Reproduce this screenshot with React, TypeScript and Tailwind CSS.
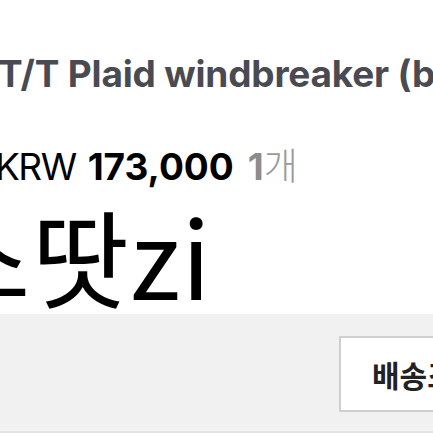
export default function App() {
  return (
    <div className="flex h-[433px] w-[433px] flex-col overflow-hidden bg-white text-black">
      <div className="shrink-0 overflow-hidden whitespace-nowrap">
        <div className="ml-[-2px] mt-[54px] font-['Inter','Noto_Sans_CJK_KR',sans-serif] text-[37px] leading-[40px] font-bold tracking-[-0.2px] text-[#4a4a52]">
          T/T Plaid windbreaker (black)
        </div>
        <div className="ml-[-5px] mt-[50px] flex items-baseline font-['Inter','Noto_Sans_CJK_KR',sans-serif] text-[37px] leading-[40px]">
          <span className="font-normal tracking-[-1.5px]">KRW</span>
          <span className="ml-[12px] font-bold">173,000</span>
          <span className="ml-[14px] font-bold text-[#8c8c8c]">1</span>
          <span className="font-['Noto_Sans_CJK_KR',sans-serif] font-light text-[#9a9a9a]">개</span>
        </div>
        <div className="ml-[-67px] mt-[7px] font-['Noto_Sans_CJK_KR',sans-serif] text-[106px] leading-[120px] font-normal tracking-[1px]">
          스땃zi
        </div>
      </div>
      <div className="flex flex-1 items-start overflow-hidden border-b-2 border-[#e3e3e3] bg-[#f1f1f1] pl-[339px] pt-[22px]">
        <div className="flex h-[76px] w-[170px] shrink-0 items-center border-2 border-[#cfcfcf] bg-white pl-[31px] font-['Noto_Sans_CJK_KR',sans-serif] text-[30px] font-bold whitespace-nowrap text-[#222]">
          배송조회
        </div>
      </div>
    </div>
  );
}
